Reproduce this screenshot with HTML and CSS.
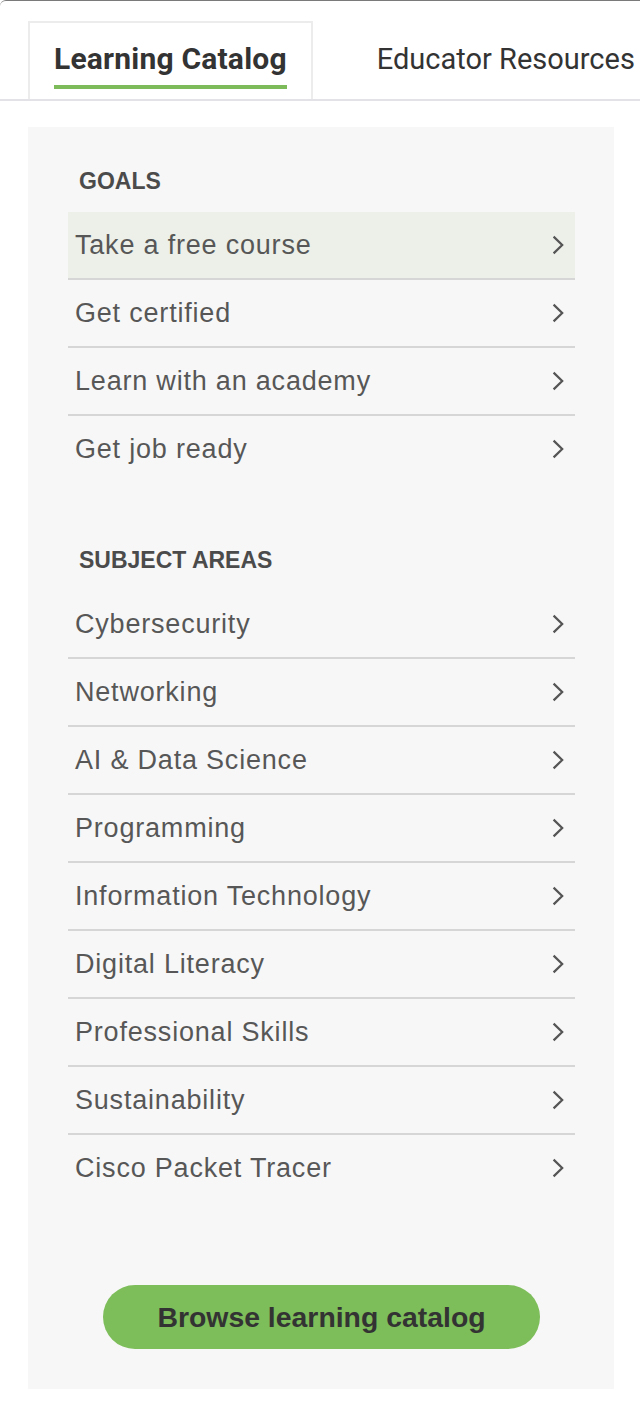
FILE: index.html
```html
<!DOCTYPE html>
<html lang="en">
<head>
  <meta charset="UTF-8">
  <meta name="viewport" content="width=device-width, initial-scale=1.0">
  <title>Learning Catalog</title>
  <link rel="stylesheet" href="styles.css">
</head>
<body>
  <div class="frame">
    <nav class="tabs">
      <a class="tab active" href="#"><span>Learning Catalog</span></a>
      <a class="tab" href="#"><span>Educator Resources</span></a>
    </nav>

    <main class="panel">
      <section class="group">
        <h2>Goals</h2>
        <ul class="menu">
          <li class="hover"><a href="#">Take a free course <svg class="chevron" viewBox="0 0 12 20"><polyline points="1.6,1.6 10.2,10 1.6,18.4"/></svg></a></li>
          <li><a href="#">Get certified <svg class="chevron" viewBox="0 0 12 20"><polyline points="1.6,1.6 10.2,10 1.6,18.4"/></svg></a></li>
          <li><a href="#">Learn with an academy <svg class="chevron" viewBox="0 0 12 20"><polyline points="1.6,1.6 10.2,10 1.6,18.4"/></svg></a></li>
          <li><a href="#">Get job ready <svg class="chevron" viewBox="0 0 12 20"><polyline points="1.6,1.6 10.2,10 1.6,18.4"/></svg></a></li>
        </ul>
      </section>

      <section class="group subjects">
        <h2>Subject Areas</h2>
        <ul class="menu">
          <li><a href="#">Cybersecurity <svg class="chevron" viewBox="0 0 12 20"><polyline points="1.6,1.6 10.2,10 1.6,18.4"/></svg></a></li>
          <li><a href="#">Networking <svg class="chevron" viewBox="0 0 12 20"><polyline points="1.6,1.6 10.2,10 1.6,18.4"/></svg></a></li>
          <li><a href="#">AI &amp; Data Science <svg class="chevron" viewBox="0 0 12 20"><polyline points="1.6,1.6 10.2,10 1.6,18.4"/></svg></a></li>
          <li><a href="#">Programming <svg class="chevron" viewBox="0 0 12 20"><polyline points="1.6,1.6 10.2,10 1.6,18.4"/></svg></a></li>
          <li><a href="#">Information Technology <svg class="chevron" viewBox="0 0 12 20"><polyline points="1.6,1.6 10.2,10 1.6,18.4"/></svg></a></li>
          <li><a href="#">Digital Literacy <svg class="chevron" viewBox="0 0 12 20"><polyline points="1.6,1.6 10.2,10 1.6,18.4"/></svg></a></li>
          <li><a href="#">Professional Skills <svg class="chevron" viewBox="0 0 12 20"><polyline points="1.6,1.6 10.2,10 1.6,18.4"/></svg></a></li>
          <li><a href="#">Sustainability <svg class="chevron" viewBox="0 0 12 20"><polyline points="1.6,1.6 10.2,10 1.6,18.4"/></svg></a></li>
          <li><a href="#">Cisco Packet Tracer <svg class="chevron" viewBox="0 0 12 20"><polyline points="1.6,1.6 10.2,10 1.6,18.4"/></svg></a></li>
        </ul>
      </section>

      <div class="actions">
        <a class="button" href="#">Browse learning catalog</a>
      </div>
    </main>
  </div>
</body>
</html>
```

FILE: styles.css
```css
* {
  margin: 0;
  padding: 0;
  box-sizing: border-box;
}

body {
  background-color: #fff;
  font-family: "Liberation Sans", Arial, Helvetica, sans-serif;
}

a {
  text-decoration: none;
  color: inherit;
}

ul {
  list-style: none;
}

.frame {
  min-height: 100vh;
  border-top: 1px solid #7a7a7a;
  border-top-left-radius: 6px;
  overflow: hidden;
}

/* tabs */

.tabs {
  display: flex;
  padding-top: 20px;
  border-bottom: 2px solid #e3e3e7;
}

.tab {
  flex-shrink: 0;
  height: 78px;
  padding: 18px 24px 0;
  border: 2px solid transparent;
  border-bottom: none;
  font-family: Roboto, sans-serif;
  font-size: 29px;
  line-height: 36px;
  color: #333;
  white-space: nowrap;
}

.tab span {
  display: inline-block;
  padding-bottom: 8px;
  border-bottom: 4px solid transparent;
}

.tab.active {
  margin-left: 28px;
  border-color: #ececec;
  font-size: 30px;
  font-weight: bold;
  letter-spacing: 0.2px;
}

.tab.active span {
  border-bottom-color: #7dbb5a;
}

.tab + .tab {
  margin-left: 38px;
}

/* panel */

.panel {
  width: 586px;
  margin: 26px 0 0 28px;
  padding: 40px 39px 40px 40px;
  background-color: #f7f7f7;
}

.group h2 {
  padding-left: 11px;
  margin-bottom: 17px;
  font-size: 23px;
  line-height: 28px;
  font-weight: bold;
  text-transform: uppercase;
  color: #4b4b4b;
}

.subjects {
  margin-top: 64px;
}

.menu li {
  border-bottom: 2px solid #d6d6d6;
}

.menu li:last-child {
  border-bottom: none;
}

.menu a {
  display: flex;
  align-items: center;
  justify-content: space-between;
  height: 66px;
  padding: 0 11px 0 7px;
  font-size: 27px;
  letter-spacing: 0.8px;
  color: #575757;
}

.menu li.hover a {
  background-color: #ecf0e9;
}

.chevron {
  width: 12px;
  height: 20px;
  fill: none;
  stroke: #555;
  stroke-width: 2.2;
}

.actions {
  display: flex;
  justify-content: center;
  margin-top: 84px;
}

.button {
  width: 437px;
  height: 64px;
  border-radius: 32px;
  background-color: #7dbd5a;
  font-size: 28.4px;
  font-weight: bold;
  line-height: 64px;
  text-align: center;
  color: #333;
}
```
